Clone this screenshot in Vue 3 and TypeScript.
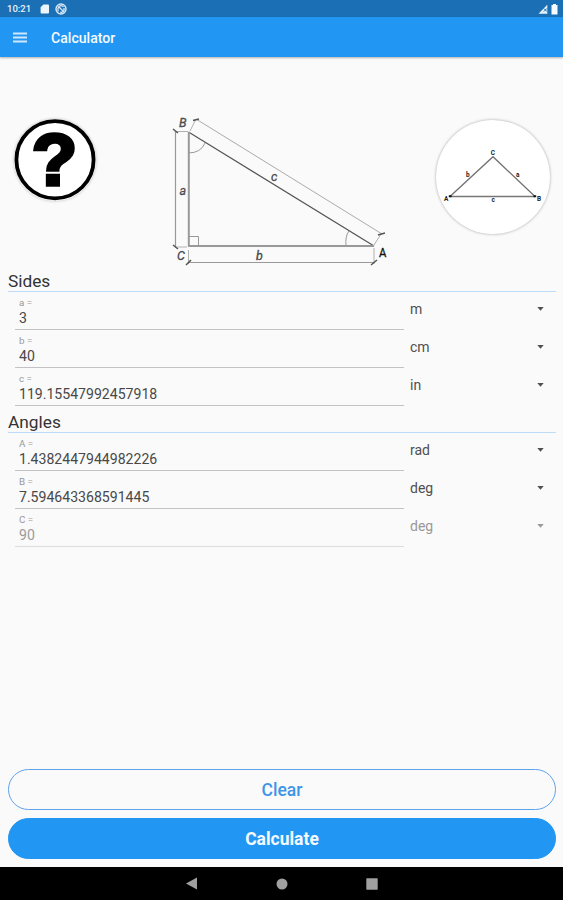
<script setup lang="ts">
import { ref } from 'vue'

interface Field {
  label: string
  value: string
  unit: string
  disabled?: boolean
}

interface Section {
  title: string
  fields: Field[]
}

const sections = ref<Section[]>([
  {
    title: 'Sides',
    fields: [
      { label: 'a =', value: '3', unit: 'm' },
      { label: 'b =', value: '40', unit: 'cm' },
      { label: 'c =', value: '119.15547992457918', unit: 'in' },
    ],
  },
  {
    title: 'Angles',
    fields: [
      { label: 'A =', value: '1.4382447944982226', unit: 'rad' },
      { label: 'B =', value: '7.594643368591445', unit: 'deg' },
      { label: 'C =', value: '90', unit: 'deg', disabled: true },
    ],
  },
])

function clear() {
  for (const section of sections.value)
    for (const field of section.fields) if (!field.disabled) field.value = ''
}
</script>

<template>
  <div class="screen">
    <div class="status">
      <span class="time">10:21</span>
      <svg class="sd" width="10" height="10" viewBox="0 0 10 10"><path d="M3.4 0.4H8Q9 .4 9 1.4V8.6Q9 9.6 8 9.6H1.6Q.6 9.6 .6 8.6V3.2Z" fill="#eef6fd" /></svg>
      <svg class="sync" width="12" height="12" viewBox="0 0 12 12" fill="none" stroke="#d5e7f6">
        <circle cx="6" cy="6" r="5" stroke-width="1.4" />
        <path d="M3 8.5V5.5A3 3 0 0 1 8.5 4M4 4L8.5 8.5M9 5V7.5A3 3 0 0 1 5 9" stroke-width="1.3" />
      </svg>
      <span class="grow"></span>
      <svg class="signal" width="10" height="10" viewBox="0 0 10 10"><path d="M.5 9.7L9.3.7V9.7Z" fill="#e8f2fb" /><path d="M5.8 4.4L9 7.6M9 4.4L5.8 7.6" stroke="#1a6fb5" stroke-width="1" /></svg>
      <svg width="7" height="11" viewBox="0 0 7 11"><path d="M2 0H5V1H6.5V10.5H.5V1H2Z" fill="#f7fbff" /></svg>
    </div>

    <header class="appbar">
      <svg width="14" height="11" viewBox="0 0 14 11"><path d="M0 1.5H14M0 5.5H14M0 9.5H14" stroke="#cfe7fc" stroke-width="2.2" /></svg>
      <h1>Calculator</h1>
    </header>

    <main>
      <div class="figures">
        <svg class="help" width="82" height="82" viewBox="0 0 82 82">
          <circle cx="41" cy="40.7" r="38.6" fill="#fff" stroke="#000" stroke-width="3.8" />
          <text class="question" transform="translate(40.5 66) scale(1.02 1)" text-anchor="middle">?</text>
        </svg>

        <svg class="diagram" width="240" height="170" viewBox="0 0 240 170" fill="none">
          <path d="M28.5 27L214 141" stroke="#555" stroke-width="1.2" />
          <path d="M28.8 27V141" stroke="#999" stroke-width="2" />
          <path d="M28 141H214" stroke="#999" stroke-width="1.8" />
          <path d="M36 14L222 129" stroke="#aaa" />
          <path d="M15.5 26V142M28.5 157.5H214" stroke="#999" stroke-width="1.2" />
          <path d="M15 26.5H28M15 142H27M28.5 145V159M214 143V159M30 26L36 14M214 140L221 129" stroke="#b0b0b0" />
          <path d="M28 48Q41 48 45 38M186 141Q185 131 189 126M29 131.5H38.5V141" stroke="#999" />
          <path d="M13 24L18 28M13 140L18 144M26 160L31 155M211 160L217 155M33 15.5L39 14M218 130L225 128" stroke="#555" stroke-width="1.5" />
          <g class="marks">
            <text x="19" y="21.5">B</text>
            <text x="19.5" y="90">a</text>
            <text x="17" y="155">C</text>
            <text x="96" y="155">b</text>
            <text x="111" y="75.5">c</text>
            <text transform="translate(219 151.5) scale(.9 1.05)" class="upright">A</text>
          </g>
        </svg>

        <div class="preview">
          <svg width="114" height="114" viewBox="0 0 114 114" fill="none">
            <path d="M14 76.5L57 36.7L99 76.5" stroke="#707070" stroke-width="1.3" />
            <path d="M14 76.5H99" stroke="#777" stroke-width="1.6" />
            <path d="M12.8 76.3H15.5M97.5 76.3H100.2" stroke="#111" stroke-width="2" />
            <g class="tiny">
              <text x="8" y="80.8">A</text>
              <text x="101" y="80.8">B</text>
              <text x="54.8" y="34.8">C</text>
              <text x="30" y="57">b</text>
              <text x="80" y="57">a</text>
              <text x="55.5" y="82">c</text>
            </g>
          </svg>
        </div>
      </div>

      <section v-for="section in sections" :key="section.title">
        <h2>{{ section.title }}</h2>
        <div v-for="field in section.fields" :key="field.label" class="row" :class="{ disabled: field.disabled }">
          <div class="field">
            <span class="label">{{ field.label }}</span>
            <span class="value">{{ field.value }}</span>
          </div>
          <div class="unit">
            <span>{{ field.unit }}</span>
            <svg width="7" height="4" viewBox="0 0 7 4"><path d="M.3 0H6.7L3.5 3.7Z" fill="currentColor" /></svg>
          </div>
        </div>
      </section>
    </main>

    <div class="actions">
      <button class="clear" type="button" @click="clear">Clear</button>
      <button class="calculate" type="button">Calculate</button>
    </div>

    <nav class="navbar">
      <svg width="12" height="13" viewBox="0 0 12 13"><path d="M11 .5V12.5L0 6.5Z" fill="#a0a0a0" /></svg>
      <svg width="12" height="12" viewBox="0 0 12 12"><circle cx="6" cy="6" r="5.5" fill="#a0a0a0" /></svg>
      <svg width="12" height="12" viewBox="0 0 12 12"><rect x=".3" y=".3" width="11.4" height="11.4" rx=".6" fill="#a0a0a0" /></svg>
    </nav>
  </div>
</template>

<style>
body {
  margin: 0;
  background: #fafafa;
}
</style>

<style scoped>
.screen {
  display: flex;
  flex-direction: column;
  width: 563px;
  height: 900px;
  overflow: hidden;
  background: #fafafa;
  color: #333;
  font-family: Roboto, sans-serif;
}
.status {
  display: flex;
  align-items: center;
  box-sizing: border-box;
  flex: 0 0 17px;
  padding: 1px 5px 0 7px;
  background: #1a6fb5;
}
.time {
  width: 33px;
  color: #e8f2fb;
  font-size: 9.5px;
  font-weight: 500;
  line-height: 16px;
}
.sync {
  margin-left: 5px;
}
.grow {
  flex: 1;
}
.signal {
  margin-right: 3px;
}
.appbar {
  display: flex;
  align-items: center;
  box-sizing: border-box;
  flex: 0 0 40px;
  gap: 24px;
  padding: 0 13px;
  background: #2196f3;
  box-shadow: 0 1px 2px rgba(0, 0, 0, 0.3);
}
h1 {
  margin: 1px 0 0;
  color: #f4faff;
  font-size: 14.1px;
  font-weight: 500;
  line-height: 20px;
}
main {
  flex: 1;
  padding: 0 7px 0 8px;
}
.figures {
  display: flex;
  align-items: flex-start;
  box-sizing: border-box;
  height: 214px;
  padding: 48px 0 0 6px;
}
.help {
  margin-top: 14px;
  overflow: visible;
  border-radius: 50%;
  box-shadow: 0 0 3px rgba(0, 0, 0, 0.25);
}
.question {
  fill: #000;
  stroke: #000;
  stroke-width: 3.6px;
  stroke-linejoin: miter;
  font-family: "Liberation Sans", Arial, sans-serif;
  font-size: 73px;
  font-weight: 700;
}
.diagram {
  margin-left: 64px;
}
.marks text {
  fill: #444;
  stroke: #555;
  stroke-width: 0.3px;
  font-size: 12.5px;
  font-style: italic;
}
.marks .upright {
  fill: #111;
  stroke: #111;
  font-style: normal;
}
.preview {
  width: 114px;
  height: 114px;
  margin: 15px 0 0 36px;
  border-radius: 50%;
  background: #fff;
  box-shadow: 0 0 3px rgba(0, 0, 0, 0.34);
}
.tiny text {
  fill: #222;
  font-size: 6.5px;
  font-weight: 700;
}
h2 {
  box-sizing: border-box;
  height: 21px;
  margin: 0;
  border-bottom: 1px solid #bddcfa;
  color: #333;
  font-size: 17.3px;
  font-weight: 400;
  line-height: 20px;
}
section {
  height: 141px;
}
.row {
  display: flex;
  height: 38px;
}
.field {
  display: flex;
  flex-direction: column;
  box-sizing: border-box;
  width: 389px;
  margin-left: 7px;
  padding: 5px 0 0 4px;
  border-bottom: 1px solid #c2c2c2;
}
.label {
  color: #999;
  font-size: 9.8px;
  line-height: 12px;
}
.value {
  margin-top: 1px;
  color: #484848;
  font-size: 14.08px;
  line-height: 17px;
}
.unit {
  display: flex;
  align-items: center;
  justify-content: space-between;
  flex: 1;
  height: 34px;
  padding: 0 12px 0 6px;
  color: #505050;
  font-size: 14px;
}
.disabled .label,
.disabled .value,
.disabled .unit {
  color: #999;
}
.disabled .field {
  border-color: #ddd;
}
.actions {
  display: flex;
  flex-direction: column;
  gap: 8px;
  padding: 0 7px 8px 8px;
}
button {
  box-sizing: border-box;
  height: 41px;
  padding: 2px 0 0;
  border: 1px solid #2196f3;
  border-radius: 21px;
  font-family: inherit;
  font-size: 17.5px;
  line-height: 37px;
}
.clear {
  border-color: #5fa2ec;
  background: transparent;
  color: #3d95e8;
  font-weight: 500;
}
.calculate {
  background: #2196f3;
  color: #f4faff;
  font-weight: 700;
}
.navbar {
  display: flex;
  align-items: center;
  justify-content: center;
  flex: 0 0 33px;
  gap: 78px;
  background: #000;
}
</style>
